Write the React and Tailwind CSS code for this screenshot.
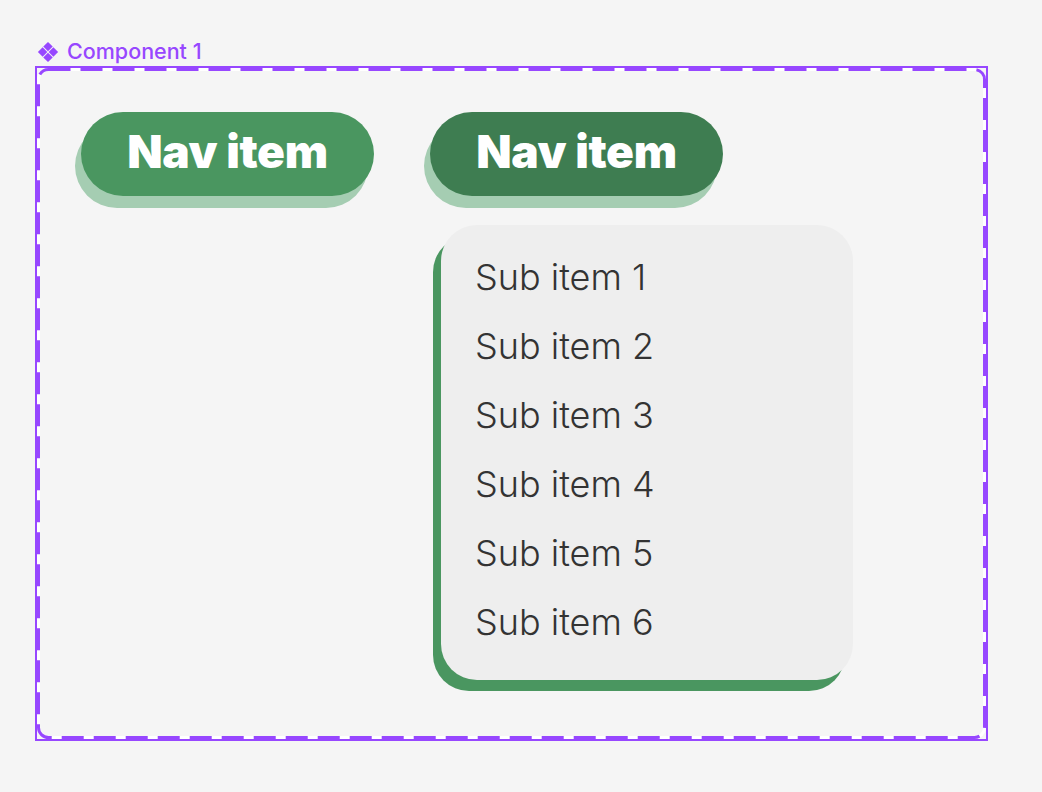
export default function App() {
  const subs = ['Sub item 1', 'Sub item 2', 'Sub item 3', 'Sub item 4', 'Sub item 5', 'Sub item 6']

  return (
    <div className="w-[1042px] h-[792px] bg-[#f5f5f5] pl-[35px] pt-[40px]" style={{ fontFamily: 'Inter, sans-serif' }}>
      {/* Label */}
      <div className="flex items-center gap-[8px] pl-[2px] h-[24px] text-[#9747ff]">
        <svg width="22" height="22" viewBox="0 0 20 20" fill="currentColor">
          <path d="M10 0.8l4.3 4.3L10 9.4 5.7 5.1z" />
          <path d="M10 10.6l4.3 4.3L10 19.2l-4.3-4.3z" />
          <path d="M0.8 10l4.3-4.3L9.4 10l-4.3 4.3z" />
          <path d="M10.6 10l4.3-4.3 4.3 4.3-4.3 4.3z" />
        </svg>
        <span className="text-[21.5px] font-medium leading-none">Component 1</span>
      </div>

      {/* Frame */}
      <div className="relative mt-[2px] w-[953px] h-[675px] border-2 border-[#9747ff]">
        <svg className="absolute inset-0 pointer-events-none" width="949" height="671">
          <rect x="1.5" y="1.5" width="946" height="668" rx="10" fill="none" stroke="#ffffff" strokeWidth="3" />
          <rect x="1.5" y="1.5" width="946" height="668" rx="10" fill="none" stroke="#9747ff" strokeWidth="3" strokeDasharray="22 10" />
        </svg>
        <div className="flex gap-[56px] pl-[44px] pt-[44px]">
          {/* Nav 1 */}
          <div>
            <div className="w-[293px] h-[84px] rounded-full bg-[#4a9660] shadow-[-6px_12px_0_#a5cdb2] flex items-center justify-center pb-[6px]">
              <span className="text-white text-[46px] font-black tracking-[-0.3px] leading-none">Nav item</span>
            </div>
          </div>

          {/* Nav 2 with dropdown */}
          <div className="flex flex-col">
            <div className="w-[293px] h-[84px] rounded-full bg-[#3e7d51] shadow-[-6px_12px_0_#a5cdb2] flex items-center justify-center pb-[6px]">
              <span className="text-white text-[46px] font-black tracking-[-0.3px] leading-none">Nav item</span>
            </div>
            <div className="mt-[29px] ml-[11px] w-[412px] h-[455px] rounded-[36px] bg-[#eeeeee] shadow-[-8px_11px_0_#4a9660] pl-[34px] pt-[32px] flex flex-col gap-[28px]">
              {subs.map((s) => (
                <div key={s} className="text-[36px] font-light leading-[41px] text-[#333333]">{s}</div>
              ))}
            </div>
          </div>
        </div>
      </div>
    </div>
  )
}
